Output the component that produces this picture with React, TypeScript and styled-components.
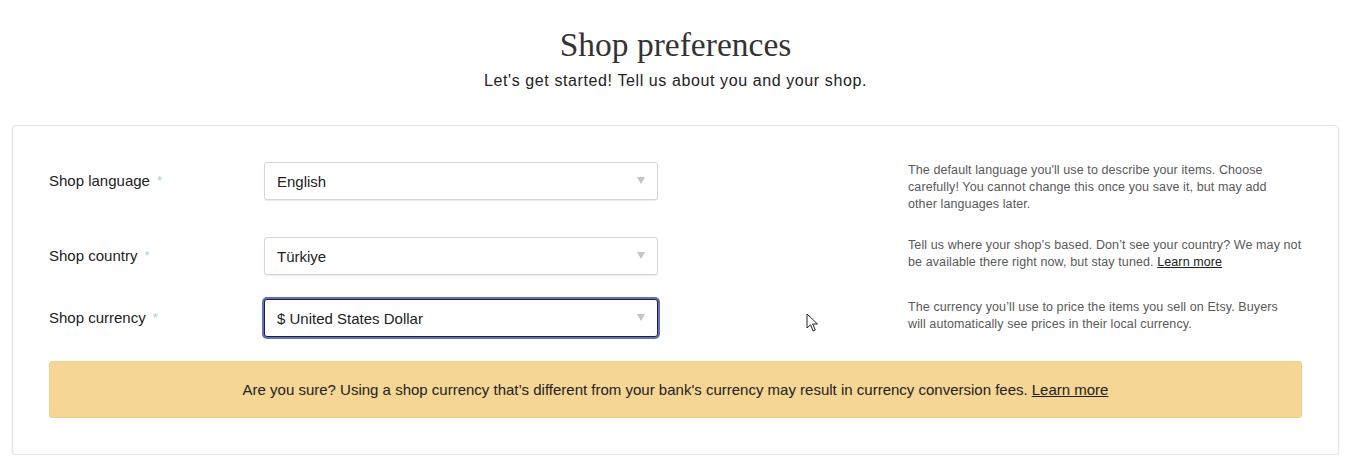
import React from "react";
import styled, { createGlobalStyle } from "styled-components";

const GlobalStyle = createGlobalStyle`
  html, body {
    margin: 0;
    padding: 0;
    background: #ffffff;
  }
  body {
    font-family: "Liberation Sans", Arial, sans-serif;
    color: #222222;
  }
`;

const Page = styled.div`
  width: 1355px;
  padding: 25px 16px 0 12px;
  box-sizing: border-box;
`;

const Header = styled.header`
  display: flex;
  flex-direction: column;
  align-items: center;
  margin-bottom: 34px;
`;

const Title = styled.h1`
  margin: 0;
  font-family: "Liberation Serif", "Times New Roman", serif;
  font-weight: 300;
  font-size: 33.5px;
  line-height: 40px;
  color: #333333;
`;

const Subtitle = styled.p`
  margin: 6px 0 0;
  font-size: 16px;
  line-height: 20px;
  color: #222222;
  letter-spacing: 0.6px;
`;

const Card = styled.section`
  border: 1px solid #e4e4e2;
  border-radius: 4px;
  box-shadow: 0 1px 2px rgba(0, 0, 0, 0.12);
  padding: 36px;
  display: flex;
  flex-direction: column;
  gap: 24px;
`;

const Row = styled.div`
  display: grid;
  grid-template-columns: 215px 394px 1fr 394px;
  align-items: start;
`;

const Label = styled.label`
  grid-column: 1;
  height: 37px;
  display: flex;
  align-items: center;
  font-size: 15px;
  color: #222222;
`;

const Required = styled.span`
  color: #a7cde0;
  margin-left: 7px;
  font-size: 13px;
`;

const SelectBox = styled.div<{ $focused?: boolean }>`
  grid-column: 2;
  height: 38px;
  box-sizing: border-box;
  border: 1px solid ${(p) => (p.$focused ? "#222222" : "#d6d6d4")};
  border-radius: 3px;
  box-shadow: ${(p) =>
    p.$focused ? "0 0 0 2px #5b72c2" : "0 1px 1px rgba(0, 0, 0, 0.08)"};
  display: flex;
  align-items: center;
  justify-content: space-between;
  padding: 0 12px;
  font-size: 15px;
  color: #222222;
  background: #ffffff;
`;

const Caret = styled.span`
  width: 0;
  height: 0;
  border-left: 4.5px solid transparent;
  border-right: 4.5px solid transparent;
  border-top: 7px solid #c4c4c4;
  margin-top: -2px;
`;

const Help = styled.p`
  grid-column: 4;
  margin: 0;
  font-size: 12.5px;
  line-height: 17px;
  color: #595959;
  letter-spacing: 0.1px;
`;

const HelpLink = styled.a`
  color: #222222;
  text-decoration: underline;
`;

const CursorSlot = styled.div`
  grid-column: 3;
  position: relative;
  height: 38px;
`;

const Cursor = styled.svg`
  position: absolute;
  left: 148px;
  top: 14px;
`;

const Banner = styled.div`
  background: #f5d695;
  border: 1px solid #efd08a;
  border-radius: 3px;
  height: 57px;
  box-sizing: border-box;
  display: flex;
  align-items: center;
  justify-content: center;
  font-size: 15px;
  color: #222222;
`;

const BannerLink = styled.a`
  color: #222222;
  text-decoration: underline;
  margin-left: 4px;
`;

type Pref = {
  label: string;
  value: string;
  focused?: boolean;
  help: React.ReactNode;
};

const prefs: Pref[] = [
  {
    label: "Shop language",
    value: "English",
    help: (
      <>
        The default language you'll use to describe your items. Choose
        carefully! You cannot change this once you save it, but may add
        <br />
        other languages later.
      </>
    ),
  },
  {
    label: "Shop country",
    value: "Türkiye",
    help: (
      <>
        Tell us where your shop’s based. Don’t see your country? We may not
        <br />
        be available there right now, but stay tuned.{" "}
        <HelpLink>Learn more</HelpLink>
      </>
    ),
  },
  {
    label: "Shop currency",
    value: "$ United States Dollar",
    focused: true,
    help: (
      <>
        The currency you’ll use to price the items you sell on Etsy. Buyers
        <br />
        will automatically see prices in their local currency.
      </>
    ),
  },
];

export default function App() {
  return (
    <>
      <GlobalStyle />
      <Page>
        <Header>
          <Title>Shop preferences</Title>
          <Subtitle>Let's get started! Tell us about you and your shop.</Subtitle>
        </Header>
        <Card>
          {prefs.map((p) => (
            <Row key={p.label}>
              <Label>
                {p.label}
                <Required>*</Required>
              </Label>
              <SelectBox $focused={p.focused}>
                <span>{p.value}</span>
                <Caret />
              </SelectBox>
              {p.focused ? (
                <CursorSlot>
                  <Cursor width="13" height="20" viewBox="0 0 13 20">
                    <path
                      d="M1 1 L1 15 L4.5 11.8 L7.2 18 L9.3 17 L6.7 11 L11.5 11 Z"
                      fill="#ffffff"
                      stroke="#222222"
                      strokeWidth="1"
                      strokeLinejoin="round"
                    />
                  </Cursor>
                </CursorSlot>
              ) : null}
              <Help>{p.help}</Help>
            </Row>
          ))}
          <Banner>
            Are you sure? Using a shop currency that’s different from your
            bank's currency may result in currency conversion fees.
            <BannerLink>Learn more</BannerLink>
          </Banner>
        </Card>
      </Page>
    </>
  );
}
